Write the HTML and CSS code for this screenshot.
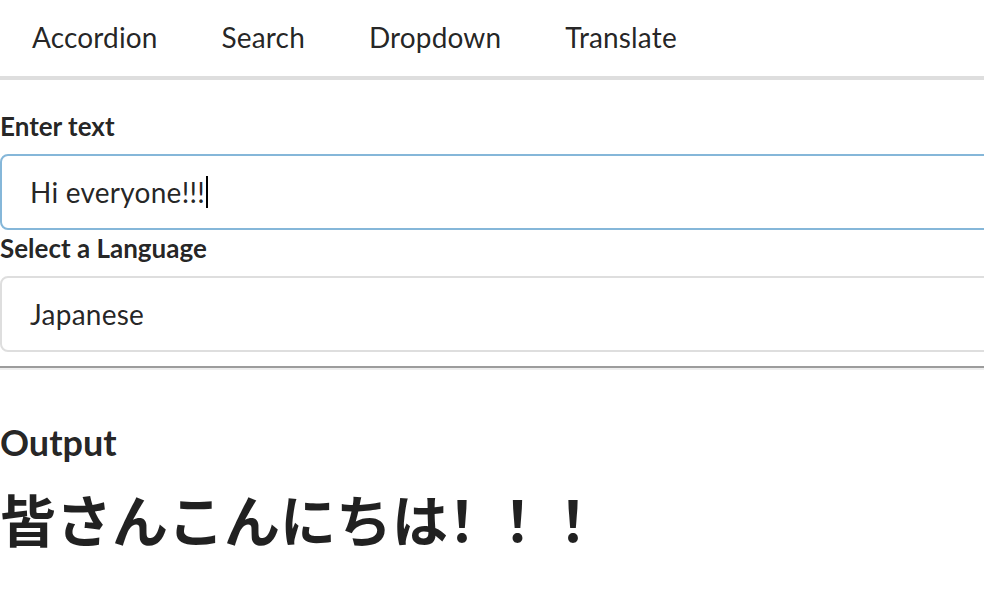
FILE: index.html
```html
<!DOCTYPE html>
<html lang="en">
<head>
<meta charset="utf-8">
<title>Translate</title>
<link rel="stylesheet" href="styles.css">
</head>
<body>
<div class="page">
  <nav class="menu">
    <a class="menu-item">Accordion</a>
    <a class="menu-item">Search</a>
    <a class="menu-item">Dropdown</a>
    <a class="menu-item">Translate</a>
  </nav>
  <form class="form">
    <label class="label">Enter text</label>
    <div class="input focused" role="textbox"><span class="value">Hi everyone!!!</span><span class="caret"></span></div>
    <label class="label">Select a Language</label>
    <div class="input dropdown" role="listbox"><span class="value">Japanese</span></div>
  </form>
  <hr class="divider">
  <h3 class="output-title">Output</h3>
  <h1 class="output-text">皆さんこんにちは<span class="bangs">！！！</span></h1>
</div>
</body>
</html>
```
FILE: styles.css
```css
html, body {
  margin: 0;
  padding: 0;
  overflow: hidden;
  background: #ffffff;
}
body {
  font-family: Lato, "Noto Sans CJK JP", sans-serif;
  color: rgba(0, 0, 0, 0.87);
}
.page {
  width: 1200px;
}
.menu {
  display: flex;
  border-bottom: 4px solid #dedede;
}
.menu-item {
  display: block;
  padding: 23px 32px 25px;
  font-size: 28px;
  line-height: 28px;
  letter-spacing: 0.15px;
  color: rgba(0, 0, 0, 0.87);
}
.form {
  margin-top: 28px;
}
.label {
  display: block;
  font-size: 26px;
  font-weight: 700;
  line-height: 36px;
  margin-bottom: 10px;
}
.input {
  box-sizing: border-box;
  height: 76px;
  display: flex;
  align-items: center;
  padding: 0 28px;
  border: 2px solid #dedede;
  border-radius: 8px;
  font-size: 28px;
  background: #ffffff;
}
.input .value {
  letter-spacing: 0.25px;
}
.input.focused {
  border-color: #85b7d9;
}
.caret {
  display: block;
  width: 2px;
  height: 32px;
  margin-left: 1px;
  background: #000000;
}
.divider {
  height: 0;
  margin: 14px 0;
  border: none;
  border-top: 2px solid #9c9c9c;
  border-bottom: 2px solid #eeeeee;
}
.output-title {
  margin: 49px 0 0;
  font-size: 36px;
  line-height: 46px;
  font-weight: 700;
}
.output-text {
  margin: 20px 0 0;
  font-family: Lato, "Noto Sans CJK JP", sans-serif;
  font-size: 56px;
  line-height: 72px;
  font-weight: 700;
}
.bangs {
  margin-left: -14px;
  letter-spacing: -0.5px;
}
```
